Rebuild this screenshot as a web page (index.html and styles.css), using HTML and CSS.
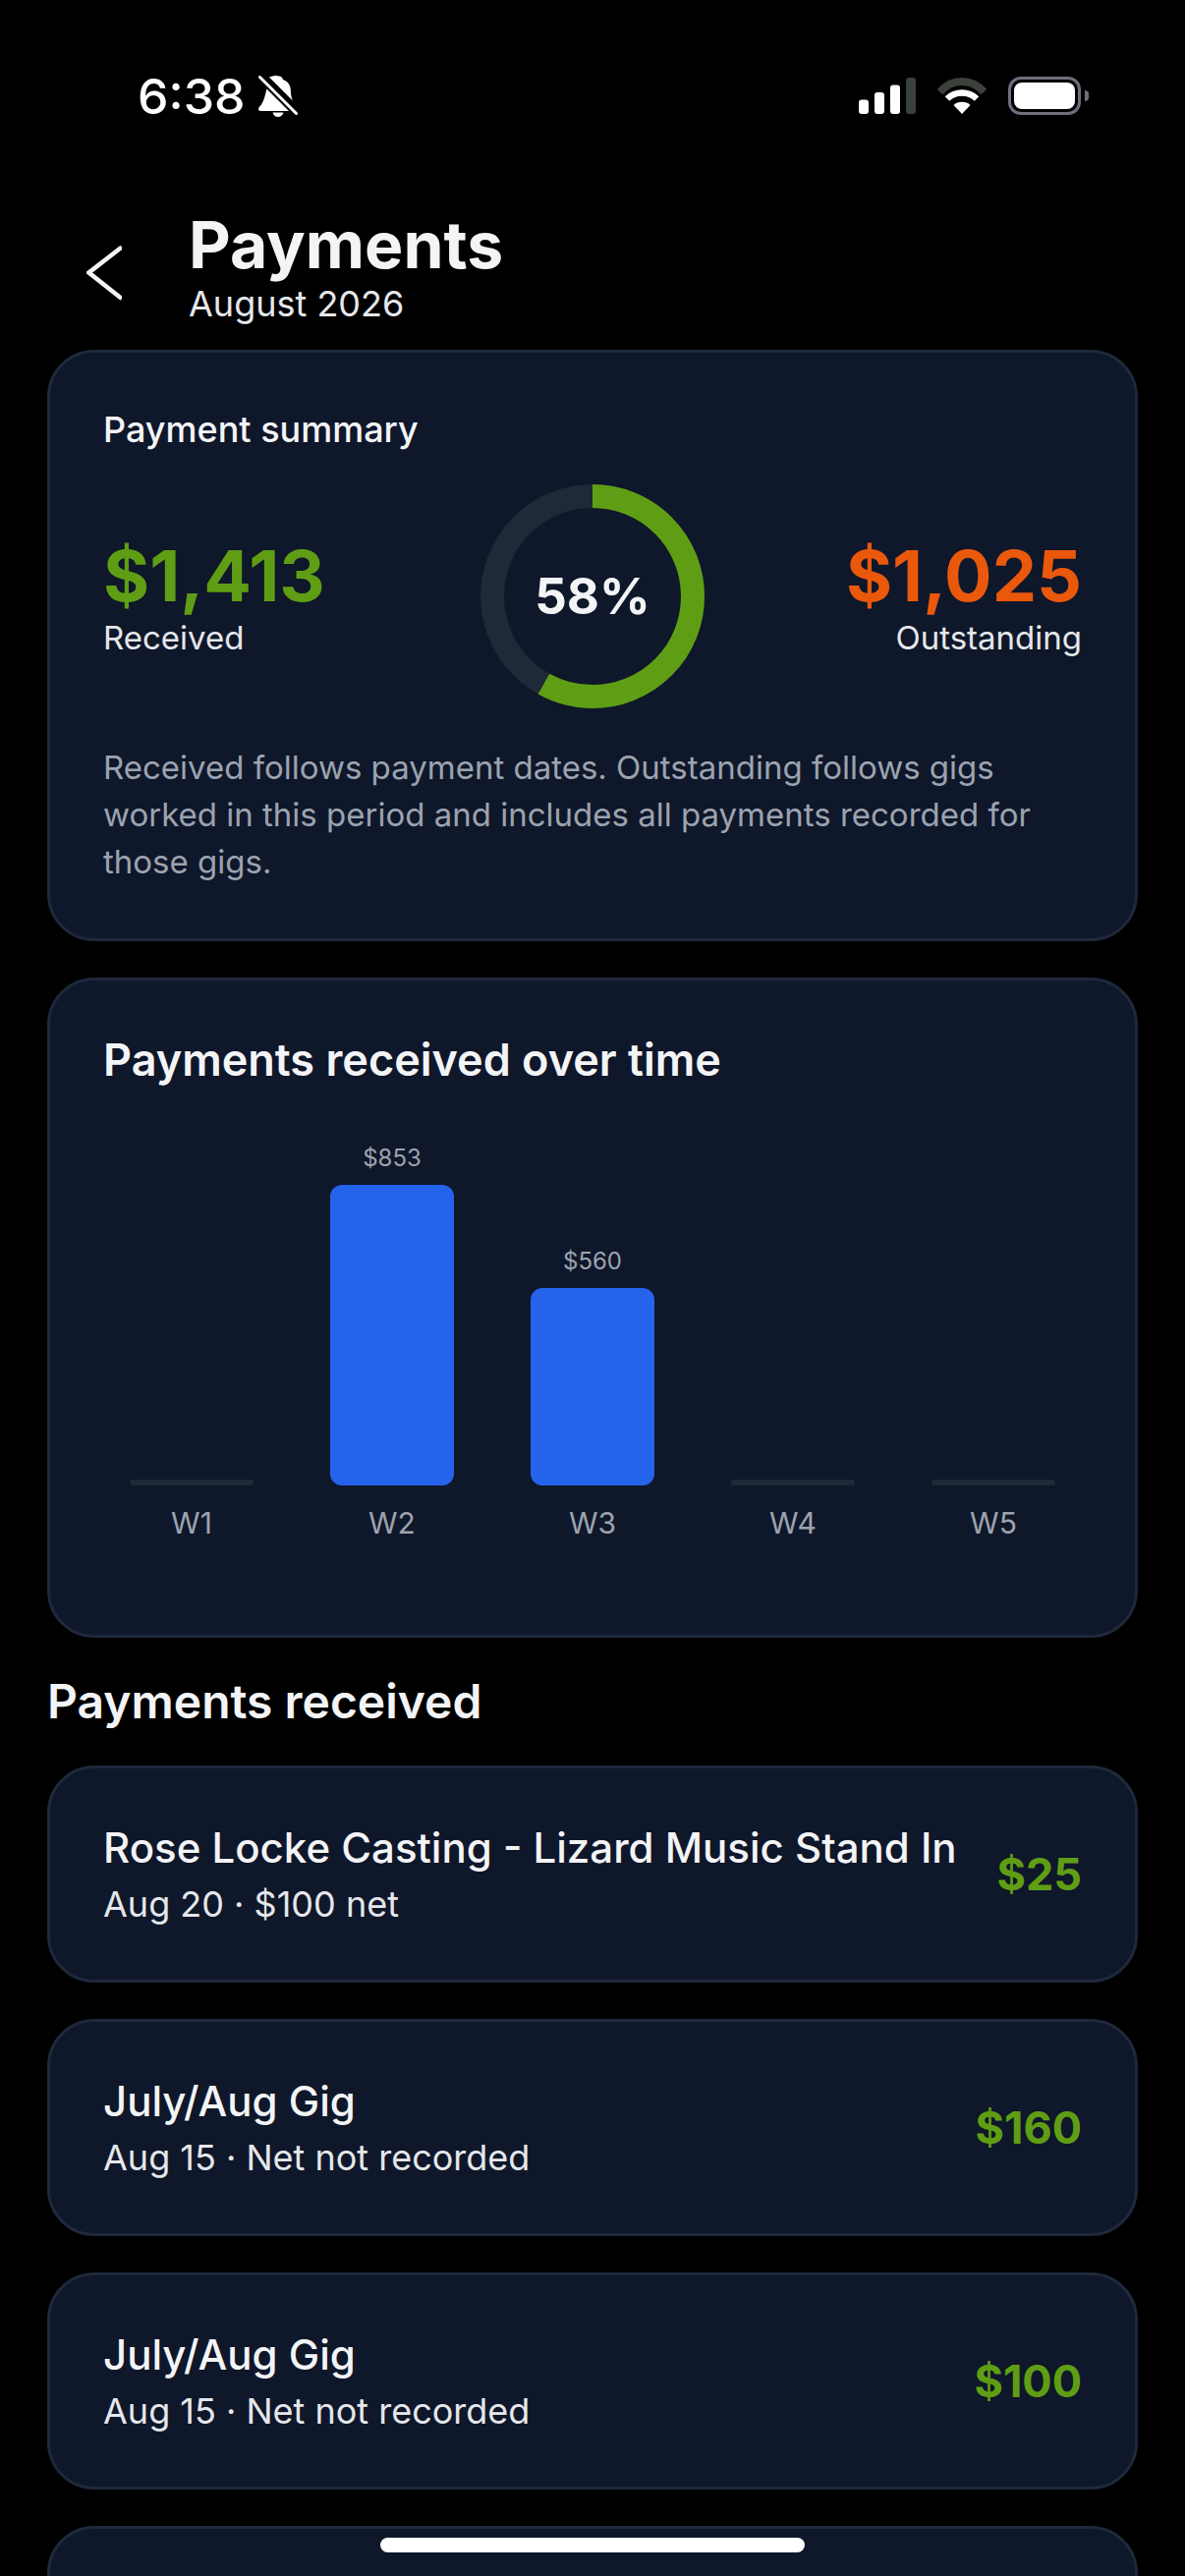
FILE: index.html
```html
<!DOCTYPE html>
<html lang="en">
<head>
  <meta charset="UTF-8" />
  <meta name="viewport" content="width=device-width, initial-scale=1.0"/>
  <title>Payments</title>
  <link rel="stylesheet" href="styles.css">
</head>
<body>

<div class="screen">
  <div class="status-bar">
    <div class="status-left">
      <span class="clock">6:38</span>
      <svg class="bell" viewBox="0 0 40 42" width="40" height="42">
        <path d="M21 0.5c2 0 3.6 1.5 3.9 3.4 5 1.500 8 6 8 11.500 0 3.500.6 7 2 10l-24-24c2-0.500 4.500-1 6-1.500.6-0 1.500.100 4.100.600zM8.500 13l23.500 23H2.500c-1.500 0-2.500-.8-2.500-2 0-1.600 2-3 3.500-5.500 2.500-4 3.500-9.500 5-15.500zM14.500 37.500h11c-.5 2.600-2.800 4.500-5.500 4.500s-5-1.900-5.500-4.500z" fill="#fff"/>
        <path d="M2 2l37 37" stroke="#000" stroke-width="7" fill="none"/>
        <path d="M1.500 1.500l37 37" stroke="#fff" stroke-width="3" stroke-linecap="round" fill="none"/>
      </svg>
    </div>
    <div class="status-right">
      <svg viewBox="0 0 58 37" width="58" height="37">
        <rect x="0" y="22.500" width="10" height="14.500" rx="3" fill="#fff"/>
        <rect x="16" y="15" width="10" height="22" rx="3" fill="#fff"/>
        <rect x="32" y="7.500" width="10" height="29.500" rx="3" fill="#fff"/>
        <rect x="48" y="0" width="10" height="37" rx="3" fill="#3a403a"/>
      </svg>
      <svg viewBox="0 0 50 37" width="50" height="37">
        <path d="M2.500 14.500C8 8.500 16 4 25 4s17 4.500 22.500 10.500" stroke="#3a403a" stroke-width="8" fill="none"/>
        <path d="M10 21.500c4-3.800 9-6 15-6s11 2.200 15 6" stroke="#fff" stroke-width="6.500" fill="none"/>
        <path d="M16.500 28c2.200-2 5-3.200 8.500-3.200s6.300 1.200 8.500 3.200L25 37z" fill="#fff"/>
      </svg>
      <div class="battery"><div class="battery-fill"></div></div>
    </div>
  </div>

  <div class="page-header">
    <svg class="back" viewBox="0 0 36 56" width="36" height="56">
      <path d="M36 1.500L2.500 27.500 36 54" stroke="#f3f4f6" stroke-width="4.500" fill="none"/>
    </svg>
    <div>
      <h1>Payments</h1>
      <p class="month">August 2026</p>
    </div>
  </div>

  <div class="content">
    <div class="card summary">
      <h2>Payment summary</h2>
      <div class="summary-row">
        <div class="stat">
          <div class="stat-value green">$1,413</div>
          <div class="stat-label">Received</div>
        </div>
        <div class="donut">
          <svg viewBox="0 0 228 228" width="228" height="228">
            <circle cx="114" cy="114" r="102" fill="none" stroke="#1f2937" stroke-width="24"/>
            <circle cx="114" cy="114" r="102" fill="none" stroke="#5f9e14" stroke-width="24"
              stroke-dasharray="371.7 640.9" transform="rotate(-90 114 114)"/>
          </svg>
          <span class="donut-label">58%</span>
        </div>
        <div class="stat right">
          <div class="stat-value orange">$1,025</div>
          <div class="stat-label">Outstanding</div>
        </div>
      </div>
      <p class="note">Received follows payment dates. Outstanding follows gigs worked in this period and includes all payments recorded for those gigs.</p>
    </div>

    <div class="card chart-card">
      <h3>Payments received over time</h3>
      <div class="chart">
        <div class="week"><div class="bar empty"></div><span class="week-name">W1</span></div>
        <div class="week"><span class="bar-value">$853</span><div class="bar" style="height: 306px"></div><span class="week-name">W2</span></div>
        <div class="week"><span class="bar-value">$560</span><div class="bar" style="height: 201px"></div><span class="week-name">W3</span></div>
        <div class="week"><div class="bar empty"></div><span class="week-name">W4</span></div>
        <div class="week"><div class="bar empty"></div><span class="week-name">W5</span></div>
      </div>
    </div>

    <h2 class="section-title">Payments received</h2>

    <div class="card payment">
      <div>
        <div class="payment-name">Rose Locke Casting - Lizard Music Stand In</div>
        <div class="payment-meta">Aug 20 · $100 net</div>
      </div>
      <div class="payment-amount green">$25</div>
    </div>
    <div class="card payment">
      <div>
        <div class="payment-name">July/Aug Gig</div>
        <div class="payment-meta">Aug 15 · Net not recorded</div>
      </div>
      <div class="payment-amount green">$160</div>
    </div>
    <div class="card payment">
      <div>
        <div class="payment-name">July/Aug Gig</div>
        <div class="payment-meta">Aug 15 · Net not recorded</div>
      </div>
      <div class="payment-amount green">$100</div>
    </div>
    <div class="card payment"></div>
  </div>

  <div class="home-bar"></div>
</div>

</body>
</html>
```

FILE: styles.css
```css
* {
  box-sizing: border-box;
}

html, body {
  margin: 0;
  background: #000;
}

.screen {
  position: relative;
  width: 1206px;
  height: 2622px;
  overflow: hidden;
  font-family: "Inter", "Liberation Sans", sans-serif;
  color: #f3f4f6;
}

/* status bar */
.status-bar {
  display: flex;
  justify-content: space-between;
  height: 190px;
  padding: 77px 106px 0 140px;
}

.status-left {
  display: flex;
  align-items: flex-start;
  gap: 14px;
}

.clock {
  font-size: 50px;
  line-height: 42px;
  font-weight: 500;
  color: #fff;
}

.status-right {
  display: flex;
  align-items: flex-start;
  gap: 22px;
  padding-top: 2px;
}

.battery {
  position: relative;
  width: 74px;
  height: 39px;
  margin-top: -1px;
  padding: 3px;
  border: 3px solid #6d707c;
  border-radius: 13px;
}

.battery-fill {
  width: 100%;
  height: 100%;
  background: #fff;
  border-radius: 8px;
}

.battery::after {
  content: "";
  position: absolute;
  top: 11px;
  right: -11px;
  width: 4px;
  height: 11px;
  background: #6d707c;
  border-radius: 0 4px 4px 0;
}

/* header */
.page-header {
  display: flex;
  align-items: center;
  height: 166px;
  padding-left: 88px;
  gap: 68px;
}

.back {
  flex-shrink: 0;
  margin-top: 10px;
}

.page-header h1 {
  margin: 0;
  font-size: 66px;
  line-height: 72px;
  font-weight: 700;
}

.month {
  margin: 0;
  font-size: 36px;
  line-height: 48px;
  color: #e5e7eb;
}

/* cards */
.content {
  display: flex;
  flex-direction: column;
  padding: 0 48px;
  gap: 37px;
}

.card {
  background: #0f172a;
  border: 3px solid #1e293b;
  border-radius: 48px;
}

.summary {
  height: 602px;
  padding: 54px;
}

.summary h2 {
  margin: 0;
  font-size: 36px;
  line-height: 48px;
  font-weight: 500;
}

.summary-row {
  display: flex;
  justify-content: space-between;
  align-items: center;
  margin-top: 32px;
}

.stat {
  width: 300px;
}

.stat.right {
  text-align: right;
}

.stat-value {
  font-size: 72px;
  line-height: 84px;
  font-weight: 700;
}

.stat-label {
  font-size: 33px;
  line-height: 42px;
  color: #e5e7eb;
}

.green {
  color: #5f9e14;
}

.orange {
  color: #ea580c;
}

.donut {
  position: relative;
  width: 228px;
  height: 228px;
}

.donut svg {
  display: block;
}

.donut-label {
  position: absolute;
  top: 0;
  left: 0;
  width: 100%;
  line-height: 228px;
  text-align: center;
  font-size: 51px;
  font-weight: 700;
}

.note {
  margin: 36px 0 0;
  font-size: 33px;
  line-height: 48px;
  color: #9ca3af;
}

/* chart */
.chart-card {
  height: 672px;
  padding: 54px;
}

.chart-card h3 {
  margin: 0;
  font-size: 45px;
  line-height: 54px;
  font-weight: 600;
}

.chart {
  display: grid;
  grid-template-columns: repeat(5, 1fr);
  gap: 24px;
  align-items: end;
  height: 420px;
  margin-top: 42px;
}

.week {
  display: flex;
  flex-direction: column;
  align-items: center;
}

.bar {
  width: 126px;
  background: #2563eb;
  border-radius: 12px;
}

.bar.empty {
  height: 6px;
  background: #1f2937;
  border-radius: 3px;
}

.bar-value {
  font-size: 24px;
  line-height: 30px;
  margin-bottom: 12px;
  color: #9ca3af;
}

.week-name {
  margin-top: 20px;
  font-size: 30px;
  line-height: 36px;
  color: #9ca3af;
}

/* payments */
.section-title {
  margin: 0;
  font-size: 48px;
  line-height: 56px;
  font-weight: 600;
  height: 56px;
}

.payment {
  display: flex;
  flex-shrink: 0;
  justify-content: space-between;
  align-items: center;
  height: 221px;
  padding: 0 54px;
}

.payment-name {
  font-size: 42px;
  line-height: 54px;
  font-weight: 500;
}

.payment-meta {
  margin-top: 6px;
  font-size: 36px;
  line-height: 48px;
  color: #e5e7eb;
}

.payment-amount {
  font-size: 45px;
  font-weight: 700;
}

.home-bar {
  position: absolute;
  left: 387px;
  top: 2583px;
  width: 432px;
  height: 15px;
  background: #fff;
  border-radius: 8px;
}
```
